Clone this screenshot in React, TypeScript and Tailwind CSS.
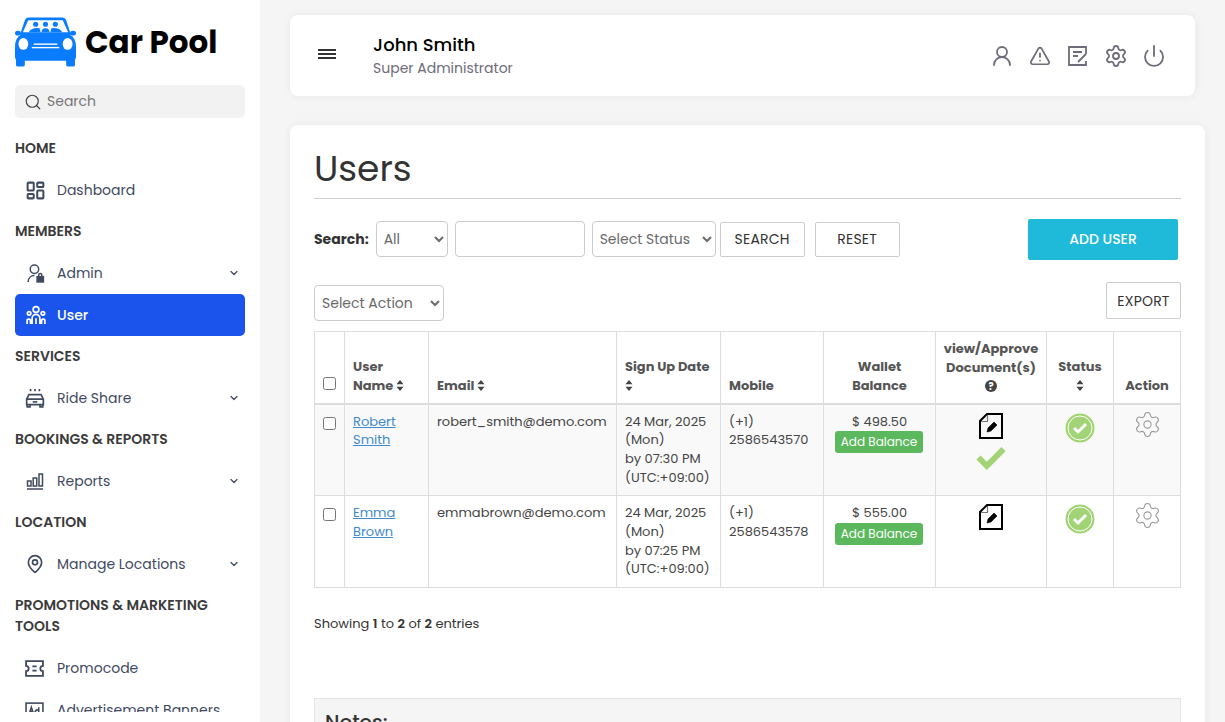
import {
  ChevronDown,
  Search,
  LayoutDashboard,
  MapPin,
  Settings,
  Power,
  UserRound,
  TriangleAlert,
} from "lucide-react";

const font = "font-['Poppins','Inter','Liberation_Sans',sans-serif]";

function Sort() {
  return (
    <svg viewBox="0 0 10 14" className="inline-block h-[11px] w-[8px] fill-[#444]">
      <path d="M5 0l4.5 5.5h-9zM5 14L.5 8.5h9z" />
    </svg>
  );
}

function Heading({ children }: { children: React.ReactNode }) {
  return (
    <div className="text-[14px] leading-[21px] font-semibold text-[#3b3b3b]">
      {children}
    </div>
  );
}

function NavItem({
  label,
  icon,
  chevron,
  active,
}: {
  label: string;
  icon: React.ReactNode;
  chevron?: boolean;
  active?: boolean;
}) {
  return (
    <div
      className={`flex h-[42px] items-center rounded-[5px] pl-[11px] pr-[5px] text-[14px] ${
        active ? "bg-[#1a54ec] font-medium text-white" : "text-[#3f4a5f]"
      }`}
    >
      <span className="flex w-[31px] shrink-0 items-center">{icon}</span>
      <span className="flex-1 whitespace-nowrap">{label}</span>
      {chevron && <ChevronDown className="h-[12px] w-[12px]" strokeWidth={2.5} />}
    </div>
  );
}

export default function App() {
  return (
    <div className={`${font} flex h-[722px] overflow-hidden bg-[#f5f5f5]`}>
      <aside className="h-[722px] w-[260px] shrink-0 bg-white px-[15px] pt-[17px]">
        <div className="h-[695px] overflow-hidden">
          <div className="flex h-[49px] items-center gap-[9px]">
            <svg viewBox="0 0 62 50" className="h-[50px] w-[61px] shrink-0 fill-[#0a7cff]">
              <path fillRule="evenodd" d="M14 0H48Q51 0 52 3L57 18H5L10 3Q11 0 14 0zM14 3Q13 3 13 4L8 15H54L49 4Q49 3 48 3z" />
              <circle cx="21" cy="7" r="2.6" />
              <circle cx="31" cy="7" r="2.6" />
              <circle cx="41" cy="7" r="2.6" />
              <path d="M14 15q3-5 11 -4l1 4zM27 15q0-4 4-4t4 4zM36 15l1-4q8-1 11 4z" />
              <ellipse cx="3" cy="16" rx="3" ry="2.5" />
              <ellipse cx="59" cy="16" rx="3" ry="2.5" />
              <path d="M7 17H55Q62 20 62 30V40Q62 44 58 44H4Q0 44 0 40V30Q0 20 7 17z" />
              <path d="M1 43H10V48Q10 50 8 50H3Q1 50 1 48zM52 43H61V48Q61 50 59 50H54Q52 50 52 48z" />
              <ellipse cx="8.5" cy="27" rx="5" ry="6" fill="#fff" />
              <ellipse cx="53.5" cy="27" rx="5" ry="6" fill="#fff" />
              <rect x="19" y="26.5" width="24" height="1.4" fill="#fff" />
              <rect x="17" y="30" width="28" height="1.4" fill="#fff" />
            </svg>
            <span className="pt-[2px] text-[31px] leading-[47px] font-bold text-black">Car Pool</span>
          </div>
          <div className="mt-[19px] flex h-[33px] items-center gap-[5px] rounded-[5px] bg-[#f2f2f2] pl-[9px] text-[14px] text-[#777]">
            <Search className="h-[18px] w-[18px] text-[#444]" strokeWidth={1.6} />
            Search
          </div>
          <div className="mt-[20px]">
            <Heading>HOME</Heading>
            <div className="mt-[10px]">
              <NavItem label="Dashboard" icon={<LayoutDashboard className="-ml-[1px] h-[21px] w-[21px]" strokeWidth={2.3} />} />
            </div>
          </div>
          <div className="mt-[10px]">
            <Heading>MEMBERS</Heading>
            <div className="mt-[10px]">
              <NavItem
                label="Admin"
                chevron
                icon={
                  <svg viewBox="0 0 18 18" className="h-[19px] w-[19px] fill-none stroke-[#3f4a5f] stroke-[1.4]">
                    <circle cx="8" cy="5" r="4" />
                    <path d="M2 17c0-4 3-6 6-6" />
                    <rect x="10.5" y="12" width="6" height="5" fill="#3f4a5f" />
                    <path d="M12 12v-1.5a1.5 1.5 0 013 0V12" />
                  </svg>
                }
              />
              <NavItem
                label="User"
                active
                icon={
                  <svg viewBox="0 0 18 18" className="h-[20px] w-[20px] fill-none stroke-white stroke-[1.5]">
                    <circle cx="9" cy="4" r="2.6" />
                    <circle cx="2.8" cy="7.5" r="1.6" />
                    <circle cx="15.2" cy="7.5" r="1.6" />
                    <path d="M5.5 17v-5a3.5 3.5 0 017 0v5M9 12v5M1 17v-3.5a1.8 1.8 0 013 0V17M14 17v-3.5a1.8 1.8 0 013 0V17" />
                  </svg>
                }
              />
            </div>
          </div>
          <div className="mt-[10px]">
            <Heading>SERVICES</Heading>
            <div className="mt-[10px]">
              <NavItem
                label="Ride Share"
                chevron
                icon={
                  <svg viewBox="0 0 18 18" className="-ml-[1px] h-[20px] w-[20px] fill-none stroke-[#3f4a5f] stroke-[1.5]">
                    <path d="M1.5 10l2-4h11l2 4v5h-15zM2 15v2h2.5v-2M13.5 15v2H16v-2M1.5 10h15" />
                    <path d="M5 1v2M9 1v2M13 1v2" />
                    <path d="M7 12.5h4" />
                  </svg>
                }
              />
            </div>
          </div>
          <div className="mt-[10px]">
            <Heading>BOOKINGS &amp; REPORTS</Heading>
            <div className="mt-[10px]">
              <NavItem
                label="Reports"
                chevron
                icon={
                  <svg viewBox="0 0 18 18" className="h-[18px] w-[18px] fill-none stroke-[#3f4a5f] stroke-[1.5]">
                    <rect x="1.5" y="9" width="3.5" height="5" />
                    <rect x="7.2" y="6" width="3.5" height="8" />
                    <rect x="13" y="2" width="3.5" height="12" />
                    <path d="M1 17h16" />
                  </svg>
                }
              />
            </div>
          </div>
          <div className="mt-[10px]">
            <Heading>LOCATION</Heading>
            <div className="mt-[10px]">
              <NavItem label="Manage Locations" chevron icon={<MapPin className="-ml-[1px] h-[20px] w-[20px]" />} />
            </div>
          </div>
          <div className="mt-[10px]">
            <Heading>PROMOTIONS &amp; MARKETING TOOLS</Heading>
            <div className="mt-[10px]">
              <NavItem
                label="Promocode"
                icon={
                  <svg viewBox="0 0 18 18" className="-ml-[1px] h-[19px] w-[19px] fill-none stroke-[#3f4a5f] stroke-[1.7]">
                    <path d="M1 2h16v4.5a2.5 2.5 0 000 5V16H1v-4.5a2.5 2.5 0 000-5z" />
                    <path d="M7 7h4M7 11h4" />
                  </svg>
                }
              />
              <NavItem
                label="Advertisement Banners"
                icon={
                  <svg viewBox="0 0 18 18" className="-ml-[1px] h-[19px] w-[19px] fill-none stroke-[#3f4a5f] stroke-[1.5]">
                    <rect x="1" y="2" width="16" height="14" />
                    <path d="M4 12l2-6 2 6M5 10h2M13 6v6M13 9a2 2 0 100 3" />
                  </svg>
                }
              />
            </div>
          </div>
        </div>
      </aside>

      <main className="flex min-w-0 flex-1 flex-col overflow-hidden pl-[30px] pr-[20px] pt-[15px]">
        <header className="mr-[10px] flex h-[81px] shrink-0 items-center rounded-[8px] bg-white pl-[28px] pr-[29px] shadow-[0_0_10px_rgba(0,0,0,0.06)]">
          <div className="-mt-[3px] flex w-[55px] flex-col gap-[2px]">
            <span className="h-[2px] w-[18px] bg-[#333]" />
            <span className="h-[2px] w-[18px] bg-[#333]" />
            <span className="h-[2px] w-[18px] bg-[#333]" />
          </div>
          <div className="flex-1">
            <div className="text-[18px] leading-[26px] font-medium text-black">John Smith</div>
            <div className="text-[14px] leading-[21px] text-[#6e6b7b]">Super Administrator</div>
          </div>
          <div className="flex items-center gap-[14px] text-[#6e6b7b]">
            <UserRound className="h-[24px] w-[24px]" strokeWidth={1.8} />
            <span className="flex h-[24px] w-[24px] items-center justify-center">
              <TriangleAlert className="h-[22px] w-[22px]" strokeWidth={1.9} />
            </span>
            <svg viewBox="0 0 24 24" className="h-[24px] w-[24px] fill-none stroke-[#6e6b7b] stroke-[1.8]">
              <path d="M20 10V3H3v18h17v-4M7 8h9M7 12h5M12 18l8-8" />
            </svg>
            <Settings className="h-[24px] w-[24px]" strokeWidth={1.8} />
            <Power className="h-[24px] w-[24px]" strokeWidth={1.8} />
          </div>
        </header>

        <section className="mt-[29px] flex-1 rounded-t-[8px] bg-white px-[24px] shadow-[0_0_10px_rgba(0,0,0,0.06)]">
          <h1 className="flex h-[74px] items-end border-b border-[#ccc] pb-[2px] text-[36px] leading-[54px] font-normal text-[#333]">
            Users
          </h1>
          <div className="mt-[20px] flex items-center text-[14px]">
            <b className="mr-[7px] font-bold text-[#333]">Search:</b>
            <select className="mb-[1px] h-[36px] w-[72px] rounded-[4px] border border-[#ccc] bg-white px-[3px] text-[#6a6a6a]">
              <option>All</option>
            </select>
            <input className="mb-[1px] ml-[7px] h-[36px] w-[130px] rounded-[4px] border border-[#ccc]" />
            <select className="mb-[1px] ml-[7px] h-[36px] w-[124px] rounded-[4px] border border-[#ccc] bg-white px-[3px] text-[#6a6a6a]">
              <option>Select Status</option>
            </select>
            <button className="ml-[4px] h-[35px] w-[85px] rounded-[2px] border border-[#ccc] tracking-[0.2px] text-[#333]">SEARCH</button>
            <button className="ml-[10px] h-[35px] w-[85px] rounded-[2px] border border-[#ccc] tracking-[0.2px] text-[#333]">RESET</button>
            <button className="ml-auto mr-[3px] h-[41px] w-[150px] rounded-[2px] bg-[#1fb9d9] font-medium text-white">ADD USER</button>
          </div>
          <div className="mt-[25px] flex items-start justify-between text-[14px]">
            <select className="h-[36px] w-[130px] rounded-[4px] border border-[#ccc] bg-white px-[3px] text-[#6a6a6a]">
              <option>Select Action</option>
            </select>
            <button className="-mt-[3px] h-[37px] w-[75px] rounded-[2px] border border-[#ccc] pt-[1px] tracking-[0.2px] text-[#333]">EXPORT</button>
          </div>
          <table className="mt-[10px] w-full table-fixed border-collapse text-[13px] text-[#444]">
            <colgroup>
              <col className="w-[30px]" />
              <col className="w-[84px]" />
              <col className="w-[188px]" />
              <col className="w-[104px]" />
              <col className="w-[103px]" />
              <col className="w-[112px]" />
              <col className="w-[111px]" />
              <col className="w-[67px]" />
              <col className="w-[67px]" />
            </colgroup>
            <thead>
              <tr className="h-[72px] text-[13px] leading-[19px] font-semibold text-[#555]">
                <th className="border border-b-2 border-[#ddd] pb-[8px] align-bottom"><input type="checkbox" className="h-[13px] w-[13px]" /></th>
                <th className="border border-b-2 border-[#ddd] px-[8px] pb-[8px] text-left align-bottom">User Name <Sort /></th>
                <th className="border border-b-2 border-[#ddd] px-[8px] pb-[8px] text-left align-bottom">Email <Sort /></th>
                <th className="border border-b-2 border-[#ddd] px-[8px] pb-[8px] text-left align-bottom">Sign Up Date <Sort /></th>
                <th className="border border-b-2 border-[#ddd] px-[8px] pb-[8px] text-left align-bottom">Mobile</th>
                <th className="border border-b-2 border-[#ddd] px-[8px] pb-[8px] text-center align-bottom">Wallet Balance</th>
                <th className="border border-b-2 border-[#ddd] px-[4px] pb-[8px] text-center align-bottom">
                  view/Approve Document(s)
                  <span className="flex h-[18px] items-center justify-center">
                    <svg viewBox="0 0 12 12" className="h-[12px] w-[12px]">
                      <circle cx="6" cy="6" r="6" fill="#444" />
                      <text x="6" y="9.5" textAnchor="middle" fontSize="9.5" fontWeight="700" fill="#fff">?</text>
                    </svg>
                  </span>
                </th>
                <th className="border border-b-2 border-[#ddd] px-[4px] pb-[8px] text-center align-bottom">Status<br /><Sort /></th>
                <th className="border border-b-2 border-[#ddd] px-[4px] pb-[8px] text-center align-bottom">Action</th>
              </tr>
            </thead>
            <tbody>
              {[
                { first: "Robert", last: "Smith", email: "robert_smith@demo.com", time: "07:30", phone: "2586543570", bal: "498.50", approved: true },
                { first: "Emma", last: "Brown", email: "emmabrown@demo.com", time: "07:25", phone: "2586543578", bal: "555.00", approved: false },
              ].map((r, i) => (
                <tr key={r.email} className={`h-[92px] leading-[18.8px] ${i === 0 ? "bg-[#f9f9f9]" : ""}`}>
                  <td className="border border-[#ddd] pt-[12px] text-center align-top"><input type="checkbox" className="h-[13px] w-[13px]" /></td>
                  <td className="border border-[#ddd] px-[8px] pt-[8px] align-top text-[#428bca] underline">{r.first}<br />{r.last}</td>
                  <td className="border border-[#ddd] px-[8px] pt-[8px] align-top">{r.email}</td>
                  <td className="border border-[#ddd] px-[8px] pt-[8px] align-top">24 Mar, 2025 (Mon)<br />by {r.time} PM (UTC:+09:00)</td>
                  <td className="border border-[#ddd] px-[8px] pt-[8px] align-top">(+1) {r.phone}</td>
                  <td className="border border-[#ddd] pt-[8px] text-center align-top">
                    $ {r.bal}
                    <div className="ml-[11px] w-[88px] rounded-[3px] bg-[#5cb85c] text-[12px] leading-[22px] text-white">Add Balance</div>
                  </td>
                  <td className="border border-[#ddd] pt-[8px] align-top">
                    <svg viewBox="0 0 24 26" className="mx-auto h-[26px] w-[24px] fill-none stroke-black stroke-2">
                      <path d="M8 1h15v24H1V8z" />
                      <path d="M8.5 2v6.5H2" stroke="#777" strokeWidth={1.2} />
                      <path d="M8 19l1-4 6-6 3 3-6 6z" fill="#000" strokeWidth={0.6} />
                    </svg>
                    {r.approved && (
                      <svg viewBox="0 0 30 24" className="mx-auto mt-[7px] h-[25px] w-[32px] fill-[#a2d476]">
                        <path d="M1 13l4-4 6 6L25 1l4 4-18 18z" />
                      </svg>
                    )}
                  </td>
                  <td className="border border-[#ddd] pt-[8px] align-top">
                    <svg viewBox="0 0 30 30" className="mx-auto h-[30px] w-[30px]">
                      <circle cx="15" cy="15" r="14.5" fill="#a2d476" />
                      <circle cx="15" cy="15" r="12" fill="none" stroke="#fff" strokeWidth="1" />
                      <path d="M9 15l4 4 8-8" fill="none" stroke="#fff" strokeWidth="3" />
                    </svg>
                  </td>
                  <td className="border border-[#ddd] pt-[5px] align-top">
                    <Settings className="mx-auto h-[29px] w-[29px] text-[#999]" strokeWidth={0.9} />
                  </td>
                </tr>
              ))}
            </tbody>
          </table>
          <p className="mt-[26px] text-[13px] text-[#333]">Showing <b className="font-semibold">1</b> to <b className="font-semibold">2</b> of <b className="font-semibold">2</b> entries</p>
          <div className="mt-[64px] border border-[#e5e5e5] bg-[#f5f5f5] px-[10px] py-[8px] text-[20px] font-medium text-[#333]">Notes:</div>
        </section>
      </main>
    </div>
  );
}
